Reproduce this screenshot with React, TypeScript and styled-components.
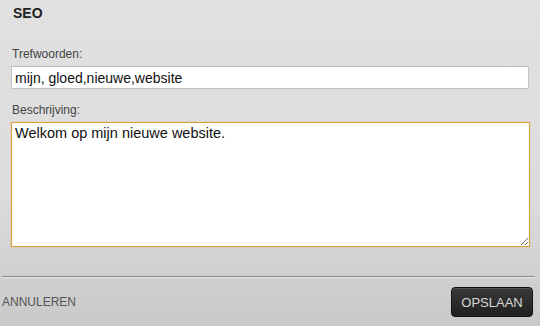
import React, { FC } from 'react'
import styled, { createGlobalStyle } from 'styled-components'

const GlobalStyle = createGlobalStyle`
    html, body {
        margin: 0;
        padding: 0;
    }
    body {
        font-family: "Liberation Sans", Arial, sans-serif;
    }
`

const Panel = styled.div`
    width: 540px;
    height: 326px;
    box-sizing: border-box;
    background: linear-gradient(#e1e1e1, #dcdcdc 60%, #c9c9c9);
    display: flex;
    flex-direction: column;
    overflow: hidden;
`
const Body = styled.div`
    padding: 5px 11px 0 11px;
    display: flex;
    flex-direction: column;
`
const Title = styled.h2`
    margin: 0 0 0 2px;
    font-size: 14px;
    font-weight: bold;
    color: #222;
    line-height: 17px;
`
const Label = styled.label<{ $top: number }>`
    display: block;
    margin: ${(p) => p.$top}px 0 5px 1px;
    font-size: 12px;
    color: #444;
    line-height: 14px;
`
const TextInput = styled.input`
    box-sizing: border-box;
    width: 518px;
    height: 23px;
    margin: 0;
    padding: 1px 3px 0 3px;
    border: 1px solid #c2c2c2;
    border-top-color: #b8b8b8;
    background: #fff;
    font-family: "Liberation Sans", Arial, sans-serif;
    font-size: 14px;
    color: #111;
    outline: none;
`
const TextArea = styled.textarea`
    box-sizing: border-box;
    width: 519px;
    height: 125px;
    margin: 0;
    padding: 2px 3px;
    border-width: 1px;
    border-style: solid;
    border-color: #dc9f3e;
    box-shadow: 0 0 1px #e8b460, inset 0 0 1px #f2d7a8;
    background: #fff;
    font-family: "Liberation Sans", Arial, sans-serif;
    font-size: 14.5px;
    line-height: 17px;
    color: #111;
    outline: none;
    resize: vertical;
`
const Separator = styled.div`
    margin: 29px 5px 0 2px;
    height: 1px;
    background: #8a8a8a;
    border-bottom: 1px solid #e6e6e6;
`
const Footer = styled.div`
    display: flex;
    align-items: center;
    justify-content: space-between;
    padding: 9px 7px 0 2px;
`
const CancelLink = styled.a`
    font-size: 12px;
    color: #555;
    text-transform: uppercase;
    cursor: pointer;
`
const SaveButton = styled.button`
    width: 82px;
    height: 30px;
    border-radius: 4px;
    border: 1px solid #111;
    background: linear-gradient(#3a3a3a, #1f1f1f);
    box-shadow: inset 0 1px 0 #555;
    color: #d8d8d8;
    font-family: "Liberation Sans", Arial, sans-serif;
    font-size: 13px;
    text-transform: uppercase;
    cursor: pointer;
`

const SeoForm: FC = () => {
    return (
        <Panel>
            <Body>
                <Title>SEO</Title>
                <Label $top={25}>Trefwoorden:</Label>
                <TextInput defaultValue="mijn, gloed,nieuwe,website" />
                <Label $top={14}>Beschrijving:</Label>
                <TextArea defaultValue="Welkom op mijn nieuwe website." />
            </Body>
            <Separator />
            <Footer>
                <CancelLink>Annuleren</CancelLink>
                <SaveButton>Opslaan</SaveButton>
            </Footer>
        </Panel>
    )
}

const App: FC = () => (
    <>
        <GlobalStyle />
        <SeoForm />
    </>
)

export default App
